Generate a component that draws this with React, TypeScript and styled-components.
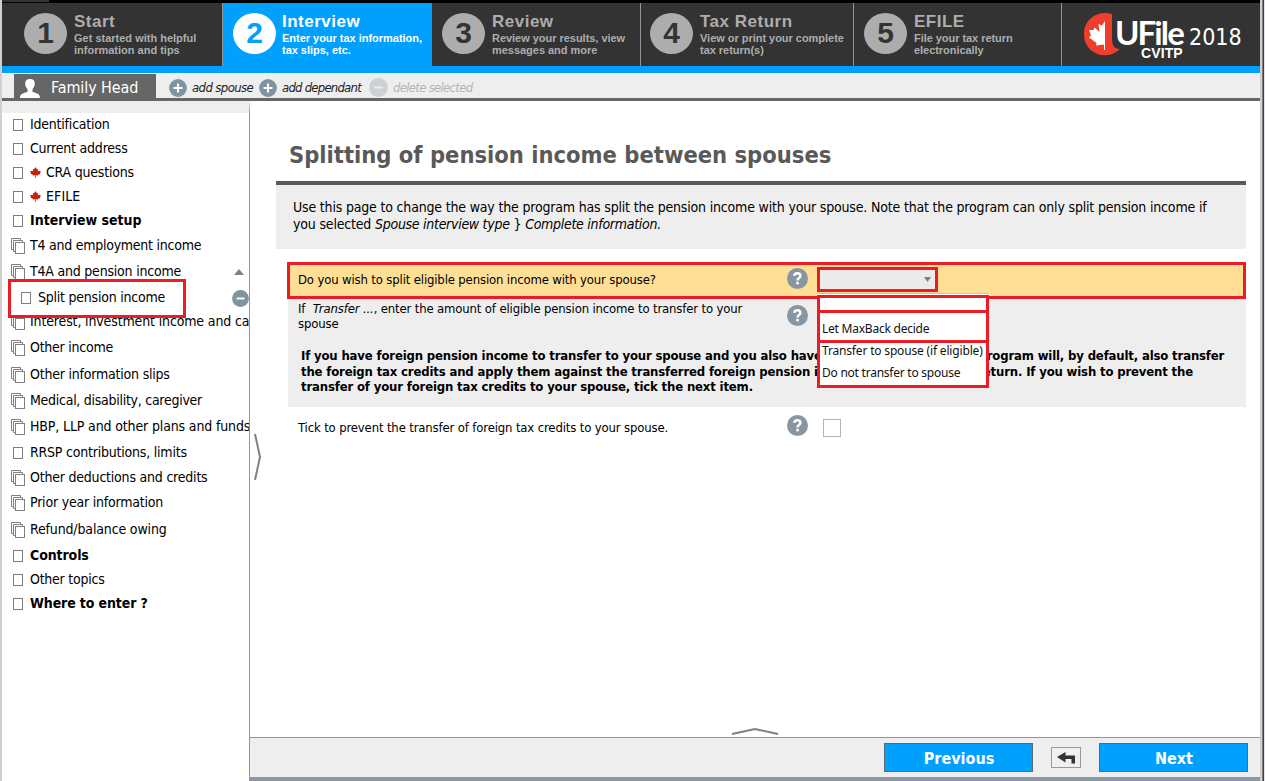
import React from 'react';
import styled, { createGlobalStyle } from 'styled-components';

const UI = '"DejaVu Sans Condensed", "DejaVu Sans", sans-serif';
const RED = '#ed1c24';
const BLUE = '#00a0ff';
const SLATE = '#8a98a2';

const Global = createGlobalStyle`
  * { box-sizing: border-box; }
  body { margin: 0; background: #fff; overflow: hidden; }
`;

const Frame = styled.div`
  width: 1265px;
  height: 781px;
  display: flex;
  background: #fff;
  font-family: ${UI};
  font-stretch: condensed;
  font-size: 14px;
  color: #000;
  white-space: nowrap;
`;
const LeftEdge = styled.div`
  flex: none;
  width: 2px;
  background: #d4d0c8;
`;
const RightEdge = styled.div`
  flex: none;
  width: 5px;
  border-left: 2px solid #d4d0c8;
  border-right: 1px solid #e4e4ea;
  background: linear-gradient(to right, #808080 50%, #404040 50%);
`;
const Window = styled.div`
  flex: none;
  width: 1258px;
  display: flex;
  flex-direction: column;
`;

const TopLine = styled.div`
  height: 3px;
  background: #000;
  &::before {
    content: '';
    display: block;
    width: 47px;
    height: 2px;
    background: #333;
  }
`;
const Header = styled.header`
  display: flex;
  height: 70px;
  background: #333;
  border-bottom: 7px solid ${BLUE};
`;
const Step = styled.div<{ $w: number; $pad: number; $active?: boolean; $line?: boolean }>`
  display: flex;
  flex: none;
  width: ${(p) => p.$w}px;
  padding: 10px 0 0 ${(p) => p.$pad}px;
  font-family: 'Liberation Sans', Arial, sans-serif;
  font-weight: bold;
  color: ${(p) => (p.$active ? '#fff' : '#adadad')};
  background: ${(p) => (p.$active ? BLUE : '#333')};
  border-right: ${(p) => (p.$line ? '1px solid #8f969b' : '0')};
`;
const StepNumber = styled.div<{ $active?: boolean }>`
  flex: none;
  width: 43px;
  height: 41px;
  border-radius: 50%;
  margin-right: ${(p) => (p.$active ? 6 : 7)}px;
  text-align: center;
  font-size: 30px;
  line-height: 40px;
  background: ${(p) => (p.$active ? '#fff' : '#adadad')};
  color: ${(p) => (p.$active ? BLUE : '#333')};
`;
const StepTitle = styled.div`
  font-size: 17px;
  line-height: 17px;
  letter-spacing: 0.5px;
`;
const StepText = styled.div<{ $ls?: number }>`
  font-size: 11px;
  line-height: 12px;
  margin-top: 2px;
  letter-spacing: ${(p) => p.$ls ?? 0}px;
  white-space: pre-line;
`;
const Brand = styled.div`
  display: flex;
  padding: 10px 0 0 22px;
  color: #fff;
`;
const BrandName = styled.div`
  margin-left: -12px;
  padding-top: 2px;
  width: 70px;
  font-family: Lato, sans-serif;
  font-size: 33px;
  line-height: 34px;
  font-weight: bold;
  letter-spacing: -1.9px;
`;
const BrandSub = styled.div`
  margin: -3px 0 0 26px;
  font: bold 14px/14px 'Liberation Sans', sans-serif;
  letter-spacing: 0.1px;
`;
const BrandYear = styled.div`
  margin-left: 4px;
  padding-top: 10px;
  font: 23px/28px ${UI};
  font-stretch: condensed;
`;

const Toolbar = styled.div`
  display: flex;
  align-items: center;
  height: 28px;
  border-top: 1px solid #fff;
  border-bottom: 3px solid #666;
  background: #eee;
`;
const Tab = styled.div`
  display: flex;
  align-items: center;
  width: 142px;
  height: 24px;
  margin: 0 13px 0 12px;
  padding: 4px 0 0 6px;
  gap: 11px;
  background: #666;
  color: #fff;
  font-size: 16px;
  letter-spacing: -0.1px;
  line-height: 24px;
`;
const Action = styled.div<{ $w: number; $ls: number; $disabled?: boolean }>`
  display: flex;
  align-items: center;
  gap: 5px;
  width: ${(p) => p.$w}px;
  padding-top: 3px;
  font-size: 13px;
  font-style: italic;
  letter-spacing: ${(p) => p.$ls}px;
  color: ${(p) => (p.$disabled ? '#b5b5b5' : '#222')};
`;

const Body = styled.div`
  display: flex;
  flex: 1;
`;
const Sidebar = styled.nav`
  flex: none;
  width: 248px;
  border-right: 1px solid ${SLATE};
  border-top: 12px solid #eee;
`;
const Item = styled.div<{ $h: number; $bold?: boolean }>`
  position: relative;
  display: flex;
  align-items: center;
  height: ${(p) => p.$h}px;
  padding-left: 9px;
  overflow: hidden;
  font-weight: ${(p) => (p.$bold ? 'bold' : 'normal')};
`;
const IconCell = styled.span`
  flex: none;
  display: flex;
  width: 19px;
`;
const Label = styled.span<{ $ls: number }>`
  letter-spacing: ${(p) => p.$ls}px;
  padding-bottom: 2px;
`;
const Leaf = styled.svg`
  margin: -2px 5px 0 0;
  flex: none;
`;
const ExpandMark = styled.svg`
  margin: 0 5px 0 auto;
`;
const ActiveItem = styled.div`
  position: relative;
  height: 24px;
  padding-top: 2px;
  display: flex;
  justify-content: flex-end;
  align-items: center;
`;
const ActiveBox = styled.div`
  position: absolute;
  z-index: 2;
  left: 6px;
  top: -6px;
  width: 178px;
  height: 39px;
  display: flex;
  align-items: center;
  gap: 5px;
  padding: 0 0 2px 8px;
  border: 3px solid ${RED};
  background: #fff;
  letter-spacing: -0.23px;
`;
const ActiveLabel = styled.span`
  padding-bottom: 2px;
`;
const Main = styled.main`
  flex: 1;
  min-width: 0;
  display: flex;
  flex-direction: column;
`;
const Content = styled.div`
  position: relative;
  height: 636px;
  padding: 39px 14px 0 26px;
`;
const SideHandle = styled.svg`
  position: absolute;
  left: 3px;
  top: 332px;
`;
const BottomHandle = styled.svg`
  position: absolute;
  left: 481px;
  top: 626px;
`;
const Title = styled.h1`
  margin: 0;
  height: 41px;
  padding-left: 13px;
  font-size: 23.5px;
  line-height: 30px;
  color: #595959;
`;
const Intro = styled.div`
  height: 68px;
  margin-bottom: 13px;
  padding: 14px 0 0 17px;
  border-top: 4px solid #5a5a5a;
  background: #eee;
  font-size: 14px;
  line-height: 17px;
  letter-spacing: -0.178px;
`;
const Term = styled.i<{ $ls?: number; $left?: number }>`
  letter-spacing: ${(p) => p.$ls ?? -0.28}px;
  margin-left: ${(p) => p.$left ?? 0}px;
`;
const Question = styled.div<{ $highlight?: boolean; $h: number }>`
  position: relative;
  display: flex;
  height: ${(p) => p.$h}px;
  margin-left: ${(p) => (p.$highlight ? 11 : 12)}px;
  padding-left: ${(p) => (p.$highlight ? 8 : 10)}px;
  font-size: 13px;
  line-height: 15px;
  letter-spacing: -0.15px;
  border: ${(p) => (p.$highlight ? `3px solid ${RED}` : '0')};
  background: ${(p) => (p.$highlight ? '#ffdf95' : 'transparent')};
`;
const QuestionText = styled.div<{ $top: number }>`
  width: 489px;
  padding-top: ${(p) => p.$top}px;
`;
const HelpSlot = styled.div<{ $top: number }>`
  width: 30px;
  padding-top: ${(p) => p.$top}px;
`;
const Select = styled.div`
  width: 121px;
  height: 25px;
  margin-top: 2px;
  padding: 7px 4px 0 0;
  display: flex;
  justify-content: flex-end;
  border: 3px solid ${RED};
  background: #ebebeb;
`;
const Menu = styled.div`
  position: absolute;
  z-index: 3;
  left: 527px;
  top: 28px;
  width: 172px;
  border-top: 1px solid #c4c4c4;
  padding-top: 1px;
  background: #fff;
  font: 12px/16px 'Noto Sans', 'Open Sans', sans-serif;
  color: #111;
`;
const MenuFrame = styled.div`
  border: 3px solid ${RED};
  height: 93px;
`;
const Option = styled.div<{ $h: number; $top: number; $framed?: boolean; $ls?: number }>`
  height: ${(p) => p.$h}px;
  padding: ${(p) => p.$top}px 0 0 2px;
  letter-spacing: ${(p) => p.$ls ?? 0}px;
  border: 0 solid ${RED};
  border-width: ${(p) => (p.$framed ? '3px 0' : '0')};
`;
const GrayArea = styled.div`
  height: 108px;
  margin-left: 12px;
  background: #eee;
  & > ${Question} { margin-left: 0; }
`;
const Note = styled.div`
  padding-left: 13px;
  font-size: 13px;
  font-weight: bold;
  line-height: 15.5px;
  letter-spacing: -0.158px;
`;
const CheckBox = styled.div`
  width: 18px;
  height: 18px;
  margin: 12px 0 0 6px;
  border: 1px solid #b4b4b4;
  background: #fff;
`;
const Footer = styled.footer`
  height: 44px;
  display: flex;
  justify-content: flex-end;
  padding: 5px 12px 0 0;
  border-top: 1px solid ${SLATE};
  border-bottom: 4px solid #8e98a2;
  background: #eee;
`;
const NavButton = styled.button`
  width: 149px;
  height: 29px;
  padding: 1px 0 0 1px;
  border: 1px solid #5c6a76;
  border-radius: 0;
  background: ${BLUE};
  color: #fff;
  font: bold 16px ${UI};
  font-stretch: condensed;
`;
const BackButton = styled.button`
  width: 30px;
  height: 21px;
  margin: 4px 18px 0;
  padding: 0;
  display: flex;
  align-items: center;
  justify-content: center;
  border: 1px solid #999;
  border-radius: 0;
  background: #f0f0f0;
`;
const FixedSvg = styled.svg`
  flex: none;
`;

const PageIcon = () => (
  <FixedSvg width="14" height="14" viewBox="0 0 14 14">
    <rect x="2.5" y="1.5" width="9" height="11" fill="#fff" stroke="#808080" />
  </FixedSvg>
);
const StackIcon = () => (
  <FixedSvg width="14" height="16" viewBox="0 0 14 16">
    <path d="M9.500 2V.5H.5v11H2M11.500 4V2.500H2.500v11H4" fill="none" stroke="#808080" />
    <rect x="4.500" y="4.500" width="9" height="11" fill="#fff" stroke="#808080" />
  </FixedSvg>
);
const LeafIcon = () => (
  <Leaf width="11" height="11" viewBox="0 0 100 100">
    <path
      d="M50 0 38 20 26 16 30 38 14 34 0 42 10 54 4 62 28 72 28 78 47 76V100H53V76L72 78 72 72 96 62 90 54 100 42 86 34 70 38 74 16 62 20Z"
      fill="#cc1f0a"
    />
  </Leaf>
);
const RoundSign = ({ size, plus, fade }: { size: number; plus?: boolean; fade?: boolean }) => (
  <FixedSvg width={size} height={size} viewBox="0 0 18 18">
    <circle cx="9" cy="9" r="8.900" fill={fade ? '#cdd1d4' : '#7f93a1'} />
    <path
      d={plus ? 'M4.500 9h9M9 4.500v9' : 'M4.800 9h8.400'}
      stroke={fade ? '#e8eaeb' : '#fff'}
      strokeWidth="2"
    />
  </FixedSvg>
);
const Help = () => (
  <svg width="21" height="21" viewBox="0 0 21 21">
    <circle cx="10.500" cy="10.500" r="10.500" fill="#8796a1" />
    <path d="M7.300 7.900c.2-3.500 6.100-3.400 6.100-.1 0 2.300-2.900 2.200-2.900 4.700" fill="none" stroke="#fff" strokeWidth="2.400" />
    <rect x="9.200" y="13.800" width="2.600" height="2.600" fill="#fff" />
  </svg>
);

const steps = [
  { n: 1, w: 221, pad: 22, title: 'Start', text: 'Get started with helpful\ninformation and tips', line: true },
  { n: 2, w: 209, pad: 10, title: 'Interview', text: 'Enter your tax information,\ntax slips, etc.', ls: -0.02, active: true },
  { n: 3, w: 209, pad: 10, title: 'Review', text: 'Review your results, view\nmessages and more', ls: -0.03, line: true },
  { n: 4, w: 213, pad: 9, title: 'Tax Return', text: 'View or print your complete\ntax return(s)', ls: -0.03, line: true },
  { n: 5, w: 208, pad: 10, title: 'EFILE', text: 'File your tax return\nelectronically', ls: -0.05, line: true },
];

type Entry = { t: string; h: number; ls?: number; stack?: boolean; leaf?: boolean; bold?: boolean; open?: boolean };
const before: Entry[] = [
  { t: 'Identification', h: 24 },
  { t: 'Current address', h: 24 },
  { t: 'CRA questions', h: 24, leaf: true },
  { t: 'EFILE', h: 24, ls: 0.1, leaf: true },
  { t: 'Interview setup', h: 24, ls: 0, bold: true },
  { t: 'T4 and employment income', h: 26, ls: -0.25, stack: true },
  { t: 'T4A and pension income', h: 26, stack: true, open: true },
];
const after: Entry[] = [
  { t: 'Interest, investment income and carrying charges', h: 26, ls: -0.14, stack: true },
  { t: 'Other income', h: 26, ls: -0.24, stack: true },
  { t: 'Other information slips', h: 27, stack: true },
  { t: 'Medical, disability, caregiver', h: 26, ls: -0.27, stack: true },
  { t: 'HBP, LLP and other plans and funds', h: 26, ls: -0.14, stack: true },
  { t: 'RRSP contributions, limits', h: 25 },
  { t: 'Other deductions and credits', h: 25, stack: true },
  { t: 'Prior year information', h: 26, stack: true },
  { t: 'Refund/balance owing', h: 27, ls: -0.15, stack: true },
  { t: 'Controls', h: 25, ls: -0.1, bold: true },
  { t: 'Other topics', h: 24, ls: -0.24 },
  { t: 'Where to enter ?', h: 24, ls: -0.12, bold: true },
];

const Row = ({ e }: { e: Entry }) => (
  <Item $h={e.h} $bold={e.bold}>
    <IconCell>{e.stack ? <StackIcon /> : <PageIcon />}</IconCell>
    {e.leaf && <LeafIcon />}
    <Label $ls={e.ls ?? -0.21}>{e.t}</Label>
    {e.open && (
      <ExpandMark width="10" height="6">
        <path d="M5 0 10 6H0Z" fill="#808080" />
      </ExpandMark>
    )}
  </Item>
);

export default function App() {
  return (
    <Frame>
      <Global />
      <LeftEdge />
      <Window>
        <TopLine />
        <Header>
          {steps.map((s) => (
            <Step key={s.n} $w={s.w} $pad={s.pad} $active={s.active} $line={s.line}>
              <StepNumber $active={s.active}>{s.n}</StepNumber>
              <div>
                <StepTitle>{s.title}</StepTitle>
                <StepText $ls={s.ls}>{s.text}</StepText>
              </div>
            </Step>
          ))}
          <Brand>
            <FixedSvg width="43" height="43" viewBox="0 0 43 43">
              <path d="M28 1C14-3 0 6 0 21c0 20 23 28 36 15-6 0-8-4-8-10Z" fill="#f03e2d" />
              <path d="M21 8 18 12.500 14.500 11 15.500 19 10.500 14.500 9.500 17 5 17 7 22.500 5 24.500 12.500 30 12 32.500 20 31.500V37H21V8Z" fill="#fff" />
            </FixedSvg>
            <BrandName>
              UFile
              <BrandSub>CVITP</BrandSub>
            </BrandName>
            <BrandYear>2018</BrandYear>
          </Brand>
        </Header>
        <Toolbar>
          <Tab>
            <svg width="20" height="19" viewBox="0 0 20 19">
              <path d="M10 0c7 0 5 8 2.500 10v3c4 1 7.500 1.500 7.500 6H0c0-4.500 3.500-5 7.500-6v-3C5 8 3 0 10 0Z" fill="#fff" />
            </svg>
            Family Head
          </Tab>
          <Action $w={90} $ls={-0.6}><RoundSign size={18} plus />add spouse</Action>
          <Action $w={110} $ls={-0.77}><RoundSign size={18} plus />add dependant</Action>
          <Action $w={110} $ls={-0.7} $disabled><RoundSign size={19} fade />delete selected</Action>
        </Toolbar>
        <Body>
          <Sidebar>
            {before.map((e) => <Row key={e.t} e={e} />)}
            <ActiveItem>
              <ActiveBox>
                <PageIcon />
                <ActiveLabel>Split pension income</ActiveLabel>
              </ActiveBox>
              <RoundSign size={17} />
            </ActiveItem>
            {after.map((e) => <Row key={e.t} e={e} />)}
          </Sidebar>
          <Main>
            <Content>
              <Title>Splitting of pension income between spouses</Title>
              <Intro>
                <div>Use this page to change the way the program has split the pension income with your spouse. Note that the program can only split pension income if</div>
                <div>you selected <Term>Spouse interview type</Term> {'}'} <Term>Complete information.</Term></div>
              </Intro>
              <Question $highlight $h={37}>
                <QuestionText $top={7}>Do you wish to split eligible pension income with your spouse?</QuestionText>
                <HelpSlot $top={3}><Help /></HelpSlot>
                <Select>
                  <svg width="7" height="5"><path d="M0 0h7L3.500 5Z" fill="#808080" /></svg>
                </Select>
                <Menu>
                  <MenuFrame>
                    <Option $h={12} $top={0} />
                    <Option $h={33} $top={8} $ls={-0.23} $framed>Let MaxBack decide</Option>
                    <Option $h={21} $top={0} $ls={-0.17}>Transfer to spouse (if eligible)</Option>
                    <Option $h={20} $top={1} $ls={-0.24}>Do not transfer to spouse</Option>
                  </MenuFrame>
                </Menu>
              </Question>
              <GrayArea>
                <Question $h={49}>
                  <QuestionText $top={2}>
                    <div>If <Term $ls={-0.15} $left={4}>Transfer ...</Term>, enter the amount of eligible pension income to transfer to your</div>
                    <div>spouse</div>
                  </QuestionText>
                  <HelpSlot $top={6}><Help /></HelpSlot>
                </Question>
                <Note>
                  <div>If you have foreign pension income to transfer to your spouse and you also have foreign tax credits, the program will, by default, also transfer</div>
                  <div>the foreign tax credits and apply them against the transferred foreign pension income on your spouse's return. If you wish to prevent the</div>
                  <div>transfer of your foreign tax credits to your spouse, tick the next item.</div>
                </Note>
              </GrayArea>
              <Question $h={40}>
                <QuestionText $top={13}>Tick to prevent the transfer of foreign tax credits to your spouse.</QuestionText>
                <HelpSlot $top={8}><Help /></HelpSlot>
                <CheckBox />
              </Question>
              <SideHandle width="10" height="48"><path d="M2 1 7 24 2 47" fill="none" stroke="#808080" strokeWidth="2" /></SideHandle>
              <BottomHandle width="48" height="9"><path d="M1 7 24 2 47 7" fill="none" stroke="#808080" strokeWidth="2" /></BottomHandle>
            </Content>
            <Footer>
              <NavButton>Previous</NavButton>
              <BackButton>
                <svg width="18" height="12" viewBox="0 0 18 12"><path d="M0 5 8.500 0V3.500H18V11.500H14.500V7H8.500V10.500Z" fill="#333" /></svg>
              </BackButton>
              <NavButton>Next</NavButton>
            </Footer>
          </Main>
        </Body>
      </Window>
      <RightEdge />
    </Frame>
  );
}
